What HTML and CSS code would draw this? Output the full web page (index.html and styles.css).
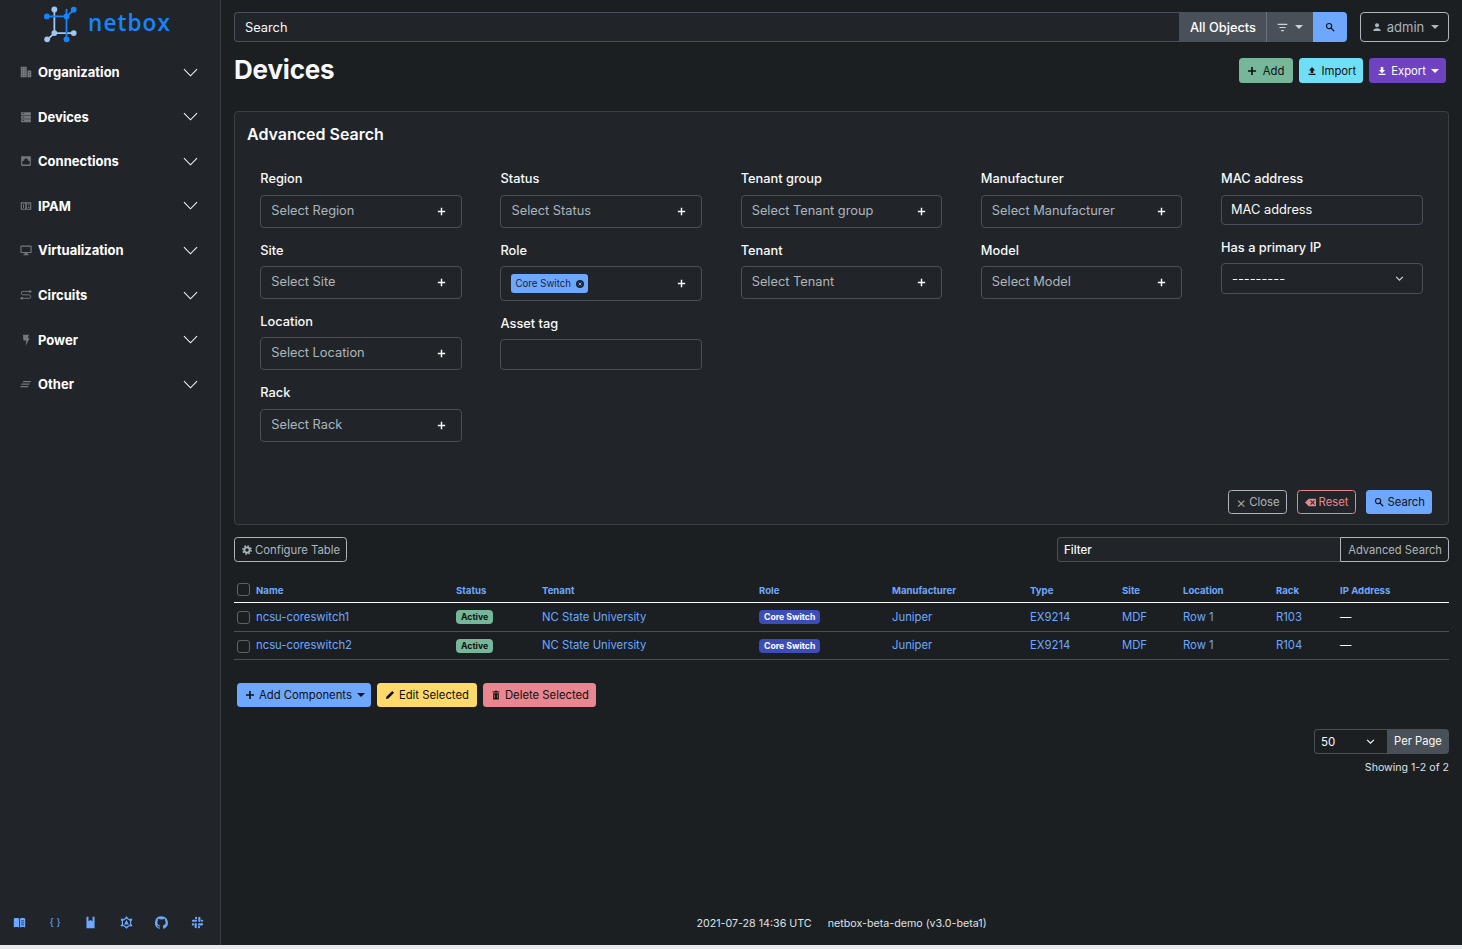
FILE: index.html
```html
<!DOCTYPE html>
<html lang="en">
<head>
<meta charset="utf-8">
<title>Devices - NetBox</title>
<link rel="stylesheet" href="styles.css">
</head>
<body>
<svg class="defs" width="0" height="0" aria-hidden="true">
  <symbol id="i-search" viewBox="0 0 16 16"><circle cx="6.500" cy="6.500" r="4.200" fill="none" stroke="currentColor" stroke-width="1.800"/><path d="M9.800 9.800 14 14" stroke="currentColor" stroke-width="2" stroke-linecap="round"/></symbol>
  <symbol id="i-plus" viewBox="0 0 16 16"><path d="M8 1.500v13M1.500 8h13" stroke="currentColor" stroke-width="2.600"/></symbol>
  <symbol id="i-chev" viewBox="0 0 16 16"><path d="M1 4.500 8 11.500 15 4.500" fill="none" stroke="currentColor" stroke-width="1.100"/></symbol>
  <symbol id="i-chev2" viewBox="0 0 16 16"><path d="M2 5 8 11 14 5" fill="none" stroke="currentColor" stroke-width="2"/></symbol>
  <symbol id="i-up" viewBox="0 0 16 16"><path d="M8 1.500 3 7h3v4h4V7h3zM2.500 12.300h11V14.500h-11z" fill="currentColor"/></symbol>
  <symbol id="i-down" viewBox="0 0 16 16"><path d="M6 1.500h4v5h3L8 11.500 3 6.500h3zM2.500 12.300h11V14.500h-11z" fill="currentColor"/></symbol>
</svg>
<div class="app">
  <aside class="sidebar">
    <div class="brand">
      <svg class="logo-mark" viewBox="0 0 40 40" aria-hidden="true">
        <g stroke-width="2" fill="none" stroke-linecap="round">
          <path stroke="#9cc8f3" d="M11.500 3v26.500M11.500 29.500H33M11.500 29.500 3.500 37"/>
          <path stroke="#1685fc" d="M2.500 11H25M25 3.500 25 37M25 11 33 4"/>
        </g>
        <g fill="#9cc8f3"><circle cx="11.500" cy="3.200" r="3.200"/><circle cx="11.500" cy="29.500" r="3.200"/><circle cx="33" cy="29.500" r="3.200"/><circle cx="3.500" cy="36.500" r="3.200"/></g>
        <g fill="#1685fc"><circle cx="3.200" cy="11" r="3.200"/><circle cx="25" cy="11" r="3.200"/><circle cx="33" cy="3.500" r="3.200"/><circle cx="25" cy="36.500" r="3.200"/></g>
      </svg>
      <span class="brand-name">netbox</span>
    </div>
    <nav class="menu">
      <a class="menu-item"><svg class="menu-icon" viewBox="0 0 16 16"><path fill="currentColor" d="M1 1h8v14H1zM10 6h5v9h-5z"/><path fill="#212529" d="M3 3h1v1H3zM6 3h1v1H6zM3 6h1v1H3zM6 6h1v1H6zM3 9h1v1H3zM6 9h1v1H6zM3 12h1v1H3zM6 12h1v1H6zM12 8h1v1h-1zM12 11h1v1h-1z"/></svg><span>Organization</span><svg class="chev"><use href="#i-chev"/></svg></a>
      <a class="menu-item"><svg class="menu-icon" viewBox="0 0 16 16"><path fill="currentColor" d="M1.500 1.500h13v4h-13zM1.500 6.200h13v4h-13zM1.500 10.900h13V15h-13z"/><path fill="#212529" d="M3.500 3h2v1h-2zM3.500 7.700h2v1h-2zM3.500 12.400h2v1h-2z"/></svg><span>Devices</span><svg class="chev"><use href="#i-chev"/></svg></a>
      <a class="menu-item"><svg class="menu-icon" viewBox="0 0 16 16"><path fill="currentColor" fill-rule="evenodd" d="M2.500 1.500h11a1 1 0 0 1 1 1v11a1 1 0 0 1-1 1h-11a1 1 0 0 1-1-1v-11a1 1 0 0 1 1-1zM3 12.500h10V8h-2V6H9.500V4.500h-3V6H5v2H3z"/></svg><span>Connections</span><svg class="chev"><use href="#i-chev"/></svg></a>
      <a class="menu-item"><svg class="menu-icon" viewBox="0 0 16 16"><path fill="currentColor" fill-rule="evenodd" d="M1 3h14v10H1zM2.500 4.500v7h4.500v-7zM9 4.500v7h4.500v-7z"/><path fill="currentColor" d="M4 5.500h1.200v5H4zM10.500 5.500h2v1.500h-2zM10.500 9h2v1.500h-2z"/></svg><span>IPAM</span><svg class="chev"><use href="#i-chev"/></svg></a>
      <a class="menu-item"><svg class="menu-icon" viewBox="0 0 16 16"><path fill="currentColor" fill-rule="evenodd" d="M1.500 2h13a1 1 0 0 1 1 1v8a1 1 0 0 1-1 1h-13a1 1 0 0 1-1-1V3a1 1 0 0 1 1-1zM2 3.500v7h12v-7z"/><path fill="currentColor" d="M6 12h4v1.500h1.500V15h-7v-1.500H6z"/></svg><span>Virtualization</span><svg class="chev"><use href="#i-chev"/></svg></a>
      <a class="menu-item"><svg class="menu-icon" viewBox="0 0 16 16"><path fill="none" stroke="currentColor" stroke-width="1.300" d="M12.500 3.200H4a2.300 2.300 0 0 0 0 4.600h8a2.300 2.300 0 0 1 0 4.600H3.500"/><circle cx="13.500" cy="3.200" r="1.700" fill="currentColor"/><circle cx="2.500" cy="12.400" r="1.700" fill="currentColor"/></svg><span>Circuits</span><svg class="chev"><use href="#i-chev"/></svg></a>
      <a class="menu-item"><svg class="menu-icon" viewBox="0 0 16 16"><path fill="currentColor" d="M4 1h8L10.500 5.500H13L7.500 15.500l.8-7H4.500z"/></svg><span>Power</span><svg class="chev"><use href="#i-chev"/></svg></a>
      <a class="menu-item"><svg class="menu-icon" viewBox="0 0 16 16"><path fill="currentColor" d="M4.500 4H15l-1 1.600H3.500zM2.500 7.300h10.500l-1 1.600H1.500zM1 10.600h10.500l-1 1.600H0z"/></svg><span>Other</span><svg class="chev"><use href="#i-chev"/></svg></a>
    </nav>
    <div class="side-links">
      <svg class="side-icon" viewBox="0 0 16 16"><path fill="currentColor" d="M1 3c2-.8 4.500-.8 6.500 0v11c-2-.8-4.500-.8-6.500 0zM8.500 3c2-.8 4.500-.8 6.500 0v11c-2-.8-4.500-.8-6.500 0z"/><path fill="#212529" d="M10 5.500h3.500v1H10zM10 8h3.500v1H10zM10 10.500h3.500v1H10z"/></svg>
      <span class="side-braces">{ }</span>
      <svg class="side-icon" viewBox="0 0 16 16"><path fill="currentColor" d="M3 1h2.500v5.500L8 5l2.500 1.500V1H13v14H3z"/></svg>
      <svg class="side-icon" viewBox="0 0 16 16"><path fill="none" stroke="currentColor" stroke-width="1.500" d="M8 2.500 13 5.500v5.500l-5 3-5-3V5.500z"/><path fill="currentColor" d="M8 0l1.700 2.500H6.300zM8 16l-1.700-2.500h3.400zM5 10.500 8 5l3 5.500z"/><circle cx="2.500" cy="4.500" r="1.500" fill="currentColor"/><circle cx="13.500" cy="4.500" r="1.500" fill="currentColor"/><circle cx="2.500" cy="11.500" r="1.500" fill="currentColor"/><circle cx="13.500" cy="11.500" r="1.500" fill="currentColor"/></svg>
      <svg class="side-icon" viewBox="0 0 16 16"><path fill="currentColor" d="M8 .2a8 8 0 0 0-2.500 15.600c.4.100.5-.2.500-.4v-1.400c-2.200.5-2.700-1-2.700-1-.4-.9-.9-1.200-.9-1.200-.7-.5.100-.5.100-.5.800.1 1.200.8 1.200.8.700 1.200 1.900.9 2.300.7.100-.5.300-.9.500-1.100-1.800-.2-3.600-.9-3.600-4 0-.9.300-1.600.8-2.100-.1-.2-.4-1 .1-2.100 0 0 .7-.2 2.200.8a7.600 7.600 0 0 1 4 0c1.500-1 2.200-.8 2.200-.8.400 1.100.2 1.900.1 2.100.5.600.8 1.300.8 2.100 0 3.100-1.900 3.700-3.700 3.900.3.300.6.800.6 1.500v2.200c0 .2.100.5.600.4A8 8 0 0 0 8 .2z"/></svg>
      <svg class="side-icon" viewBox="0 0 16 16"><g fill="currentColor"><rect x="1" y="4.500" width="6.500" height="2.600" rx="1.300"/><rect x="5" y="1" width="2.600" height="3" rx="1.200"/><rect x="9" y="1" width="2.600" height="6.500" rx="1.300"/><rect x="12" y="4.500" width="3" height="2.600" rx="1.200"/><rect x="8.500" y="9" width="6.500" height="2.600" rx="1.300"/><rect x="8.500" y="12" width="2.600" height="3" rx="1.200"/><rect x="4.500" y="8.500" width="2.600" height="6.500" rx="1.300"/><rect x="1" y="9" width="3" height="2.600" rx="1.200"/></g></svg>
    </div>
  </aside>
  <main class="main">
    <header class="topbar">
      <div class="search-group">
        <div class="search-input">Search</div>
        <div class="search-objects">All Objects</div>
        <div class="search-filter"><svg class="i-filter" viewBox="0 0 16 16"><path d="M1 3.500h14M3.500 8h9M6 12.500h4" stroke="currentColor" stroke-width="1.600"/></svg><i class="caret"></i></div>
        <div class="search-go"><svg class="ico10"><use href="#i-search"/></svg></div>
      </div>
      <div class="user-btn"><svg class="i-user" viewBox="0 0 16 16"><circle cx="8" cy="5" r="3.200" fill="currentColor"/><path d="M2 14.500c0-3 2.500-4.500 6-4.500s6 1.500 6 4.500z" fill="currentColor"/></svg><span>admin</span><i class="caret"></i></div>
    </header>
    <section class="title-row">
      <h1 class="page-title">Devices</h1>
      <div class="actions">
        <a class="btn btn-green"><svg class="ico10"><use href="#i-plus"/></svg><span class="gap5">Add</span></a>
        <a class="btn btn-cyan"><svg class="ico10"><use href="#i-up"/></svg>Import</a>
        <a class="btn btn-purple"><svg class="ico10"><use href="#i-down"/></svg>Export<i class="caret"></i></a>
      </div>
    </section>
    <section class="card">
      <h2 class="card-title">Advanced Search</h2>
      <div class="filter-grid">
        <div class="filter-col">
          <div class="field"><label>Region</label><div class="select">Select Region<svg class="plus"><use href="#i-plus"/></svg></div></div>
          <div class="field"><label>Site</label><div class="select">Select Site<svg class="plus"><use href="#i-plus"/></svg></div></div>
          <div class="field"><label>Location</label><div class="select">Select Location<svg class="plus"><use href="#i-plus"/></svg></div></div>
          <div class="field"><label>Rack</label><div class="select">Select Rack<svg class="plus"><use href="#i-plus"/></svg></div></div>
        </div>
        <div class="filter-col">
          <div class="field"><label>Status</label><div class="select">Select Status<svg class="plus"><use href="#i-plus"/></svg></div></div>
          <div class="field"><label>Role</label><div class="select select-tag"><span class="tag">Core Switch<svg class="tag-x" viewBox="0 0 16 16"><circle cx="8" cy="8" r="8" fill="currentColor"/><path d="M5 5l6 6M11 5l-6 6" stroke="#6ea8fe" stroke-width="2"/></svg></span><svg class="plus"><use href="#i-plus"/></svg></div></div>
          <div class="field field-asset"><label>Asset tag</label><div class="input-empty"></div></div>
        </div>
        <div class="filter-col">
          <div class="field"><label>Tenant group</label><div class="select">Select Tenant group<svg class="plus"><use href="#i-plus"/></svg></div></div>
          <div class="field"><label>Tenant</label><div class="select">Select Tenant<svg class="plus"><use href="#i-plus"/></svg></div></div>
        </div>
        <div class="filter-col">
          <div class="field"><label>Manufacturer</label><div class="select">Select Manufacturer<svg class="plus"><use href="#i-plus"/></svg></div></div>
          <div class="field"><label>Model</label><div class="select">Select Model<svg class="plus"><use href="#i-plus"/></svg></div></div>
        </div>
        <div class="filter-col">
          <div class="field"><label>MAC address</label><div class="input-mac">MAC address</div></div>
          <div class="field field-ip"><label>Has a primary IP</label><div class="select-ip">---------<svg class="chev-small"><use href="#i-chev2"/></svg></div></div>
        </div>
      </div>
      <div class="card-actions">
        <a class="btn btn-outline"><span class="x">×</span>Close</a>
        <a class="btn btn-outline-red"><svg class="ico11" viewBox="0 0 16 16"><path fill="currentColor" fill-rule="evenodd" d="M5.500 2.500H16v11H5.500L0 8zM7.500 5.500 10 8l-2.500 2.500 1 1L11 9l2.500 2.500 1-1L12 8l2.500-2.500-1-1L11 7 8.500 4.500z"/></svg>Reset</a>
        <a class="btn btn-blue"><svg class="ico10"><use href="#i-search"/></svg>Search</a>
      </div>
    </section>
    <section class="table-tools">
      <a class="btn btn-outline btn-config"><svg class="ico10" viewBox="0 0 16 16"><circle cx="8" cy="8" r="4.300" fill="none" stroke="currentColor" stroke-width="3"/><circle cx="8" cy="8" r="6.600" fill="none" stroke="currentColor" stroke-width="2.400" stroke-dasharray="2.590 2.590"/></svg>Configure Table</a>
      <div class="filter-group"><div class="filter-input">Filter</div><div class="filter-adv">Advanced Search</div></div>
    </section>
    <table class="devices">
      <thead>
        <tr><th class="c-check"><i class="check"></i></th><th class="c-name">Name</th><th class="c-status">Status</th><th class="c-tenant">Tenant</th><th class="c-role">Role</th><th class="c-man">Manufacturer</th><th class="c-type">Type</th><th class="c-site">Site</th><th class="c-loc">Location</th><th class="c-rack">Rack</th><th>IP Address</th></tr>
      </thead>
      <tbody>
        <tr><td><i class="check"></i></td><td><a>ncsu-coreswitch1</a></td><td><span class="badge badge-green">Active</span></td><td><a>NC State University</a></td><td><span class="badge badge-indigo">Core Switch</span></td><td><a>Juniper</a></td><td><a>EX9214</a></td><td><a>MDF</a></td><td><a>Row 1</a></td><td><a>R103</a></td><td>—</td></tr>
        <tr><td><i class="check"></i></td><td><a>ncsu-coreswitch2</a></td><td><span class="badge badge-green">Active</span></td><td><a>NC State University</a></td><td><span class="badge badge-indigo">Core Switch</span></td><td><a>Juniper</a></td><td><a>EX9214</a></td><td><a>MDF</a></td><td><a>Row 1</a></td><td><a>R104</a></td><td>—</td></tr>
      </tbody>
    </table>
    <section class="bulk">
      <a class="btn btn-blue"><svg class="ico10"><use href="#i-plus"/></svg>Add Components<i class="caret"></i></a>
      <a class="btn btn-yellow"><svg class="ico10" viewBox="0 0 16 16"><path fill="currentColor" d="M11.500 1.500 14.500 4.500 5.500 13.500 1.500 14.500 2.500 10.500z"/></svg>Edit Selected</a>
      <a class="btn btn-red"><svg class="ico10" viewBox="0 0 16 16"><path fill="currentColor" fill-rule="evenodd" d="M6 1h4v1.500h3.500V4h-11V2.500H6zM3.500 5h9v10h-9zM5.500 7v6h1V7zM9.500 7v6h1V7z"/></svg>Delete Selected</a>
    </section>
    <section class="pager">
      <div class="per-page"><div class="per-select">50<svg class="chev-small light"><use href="#i-chev2"/></svg></div><div class="per-label">Per Page</div></div>
      <div class="showing">Showing 1-2 of 2</div>
    </section>
    <footer class="footer"><span>2021-07-28 14:36 UTC</span><span>netbox-beta-demo (v3.0-beta1)</span></footer>
  </main>
</div>
<div class="window-edge"></div>
</body>
</html>
```
FILE: styles.css
```css
* { box-sizing: border-box; }
html, body { margin: 0; height: 100%; }
body { background: #1b1f22; color: #f8f9fa; font-family: Inter, "Liberation Sans", sans-serif; font-size: 13px; overflow: hidden; }
.defs { position: absolute; }
a { text-decoration: none; color: inherit; }
.app { display: flex; height: 945px; }
.sidebar { width: 221px; flex: none; background: #212529; border-right: 1px solid #3a3f44; display: flex; flex-direction: column; }
.brand { height: 50px; display: flex; align-items: flex-start; padding: 6px 0 0 44px; gap: 8px; }
.logo-mark { width: 36px; height: 37px; }
.brand-name { color: #1685fc; font-size: 22.500px; font-weight: 600; letter-spacing: 1.100px; line-height: 33px; font-family: "Open Sans", sans-serif; }
.menu { display: flex; flex-direction: column; }
.menu-item { height: 44.550px; display: flex; align-items: center; padding: 0 22.500px 0 20px; font-weight: 700; font-size: 13px; color: #fff; }
.menu-item span { flex: 1; margin-left: 6px; }
.menu-icon { width: 12px; height: 12px; color: #73787d; }
.chev { width: 15px; height: 15px; color: #f8f9fa; }
.side-links { margin-top: auto; height: 30px; display: flex; align-items: flex-start; justify-content: space-between; padding: 0 16px 0 13px; color: #6ea8fe; }
.side-icon { width: 13px; height: 13px; margin-top: 1px; }
.side-braces { width: 13px; text-align: center; white-space: nowrap; font-size: 10px; line-height: 14px; }
.main { flex: 1; padding: 12px 13px 0; display: flex; flex-direction: column; min-width: 0; }
.topbar { display: flex; gap: 13px; height: 30px; flex: none; }
.search-group { flex: 1; display: flex; height: 30px; }
.search-input { flex: 1; background: #212529; border: 1px solid #495057; border-right: 0; border-radius: 4px 0 0 4px; padding: 0 10px; line-height: 29px; font-size: 12.800px; color: #f8f9fa; }
.search-objects { width: 87px; background: #495057; font-size: 12.800px; font-weight: 500; line-height: 31px; padding-left: 1px; text-align: center; color: #fff; }
.search-filter { width: 47px; background: #495057; border-left: 1px solid #6c757d; display: flex; align-items: center; justify-content: center; gap: 7px; color: #d0d3d6; }
.i-filter { width: 11px; height: 11px; }
.search-go { width: 34px; background: #6ea8fe; color: #111; border-radius: 0 4px 4px 0; display: flex; align-items: center; justify-content: center; }
.ico10 { width: 10px; height: 10px; flex: none; }
.ico11 { width: 11px; height: 11px; flex: none; }
.caret { display: inline-block; width: 0; height: 0; border: 4px solid transparent; border-top-color: currentColor; border-bottom: 0; margin-left: 7px; }
.search-filter .caret { margin-left: 0; }
.user-btn { width: 89px; border: 1px solid #adb5bd; border-radius: 4px; padding-left: 2px; display: flex; align-items: center; justify-content: center; color: #adb5bd; font-size: 13px; }
.i-user { width: 10px; height: 10px; margin-right: 5px; }
.title-row { display: flex; align-items: flex-start; justify-content: space-between; flex: none; height: 69px; }
.page-title { margin: 11px 0 0; font-size: 26px; line-height: 34px; font-weight: 700; letter-spacing: -.2px; color: #f8f9fa; }
.actions { display: flex; gap: 6px; margin: 16px 3px 0 0; }
.actions .btn { height: 25px; }
.btn { display: inline-flex; align-items: center; height: 24px; padding: 0 7px 0 8px; border-radius: 3.500px; font-size: 11.300px; gap: 4px; white-space: nowrap; }
.btn .caret { margin-left: 1px; }
.btn-green { background: #75b798; color: #111; padding-right: 9px; }
.gap5 { margin-left: 2px; }
.btn-cyan { background: #6edff6; color: #111; }
.btn-purple { background: #6f42c1; color: #fff; }
.btn-blue { background: #6ea8fe; color: #111; }
.btn-yellow { background: #ffda6a; color: #111; padding-right: 8px; }
.btn-red { background: #ea868f; color: #111; }
.btn-outline { border: 1px solid #adb5bd; color: #adb5bd; padding: 0 6px 0 7px; }
.btn-outline-red { border: 1px solid #ea868f; color: #ea868f; padding: 0 6px 0 7px; gap: 3px; }
.btn-config { gap: 3px; height: 25px; }
.card { flex: none; height: 414px; background: #212529; border: 1px solid #3a3f44; border-radius: 4px; padding: 11px 12px 0; display: flex; flex-direction: column; }
.card-title { margin: 0; font-size: 16px; line-height: 22px; font-weight: 600; color: #f8f9fa; }
.filter-grid { display: grid; grid-template-columns: repeat(5, 201.600px); column-gap: 38.600px; padding: 24.300px 0 0 13.300px; flex: 1; }
.filter-col { display: flex; flex-direction: column; }
.field { height: 71.300px; }
.field label { display: block; font-size: 12.800px; line-height: 19px; margin-bottom: 6.500px; font-weight: 500; color: #f8f9fa; }
.select { height: 33px; border: 1px solid #495057; border-radius: 4px; background: #212529; display: flex; align-items: center; justify-content: space-between; padding: 0 15px 2px 10px; font-size: 12.800px; color: #adb5bd; }
.plus { width: 9px; height: 9px; margin-top: 2px; color: #f8f9fa; flex: none; }
.select-tag { height: 35px; padding-bottom: 0; }
.select-tag .plus { margin-top: 0; }
.tag { background: #6ea8fe; color: #1b2530; border-radius: 3px; height: 19px; display: inline-flex; align-items: center; padding: 0 4px; font-size: 9.700px; gap: 5px; }
.tag-x { width: 8px; height: 8px; }
.field .field-asset-label { margin: 0; }
.field-asset label { margin: 2px 0 6px; }
.input-empty { height: 31px; border: 1px solid #495057; border-radius: 4px; }
.input-mac { height: 30px; border: 1px solid #495057; border-radius: 4px; padding: 0 9px; line-height: 28px; font-size: 12.800px; color: #f8f9fa; }
.field-ip label { margin: -1px 0 6px; }
.field-ip { height: auto; margin-top: -2px; }
.select-ip { height: 31px; border: 1px solid #495057; border-radius: 4px; display: flex; align-items: center; justify-content: space-between; padding: 0 18px 0 10px; font-size: 12.800px; color: #f8f9fa; }
.chev-small { width: 9px; height: 9px; color: #ced4da; }
.chev-small.light { color: #f8f9fa; }
.card-actions { display: flex; justify-content: flex-end; gap: 10px; padding: 0 4px 10px 0; }
.x { font-size: 15px; line-height: 1; font-weight: 300; width: 8px; margin-right: 1px; text-align: center; color: #adb5bd; }
.table-tools { display: flex; justify-content: space-between; flex: none; margin-top: 12px; height: 25px; }
.filter-group { display: flex; width: 392px; }
.filter-input { flex: 1; background: #212529; border: 1px solid #495057; border-right: 0; border-radius: 4px 0 0 4px; padding: 0 6px; line-height: 24px; font-size: 11.500px; font-weight: 500; }
.filter-adv { border: 1px solid #adb5bd; border-radius: 0 4px 4px 0; padding: 0 6px 0 7px; line-height: 24px; font-size: 11.200px; color: #adb5bd; }
.devices { width: 100%; border-collapse: collapse; table-layout: fixed; margin-top: 15px; flex: none; }
.devices th { height: 25px; padding: 3px 0 0; font-size: 9.600px; font-weight: 700; color: #6ea8fe; text-align: left; border-bottom: 1px solid #f8f9fa; }
.devices td { height: 28px; padding: 0; font-size: 11.300px; color: #f8f9fa; border-bottom: 1px solid #495057; }
.devices tbody tr:first-child td { height: 29px; }
.devices a { color: #6ea8fe; }
.check { display: block; width: 13px; height: 13px; margin-left: 3px; border: 1px solid #5c636a; border-radius: 3px; }
td .check { margin-top: 2px; }
th .check { margin-top: -3px; }
.c-check { width: 22px; }
.c-name { width: 200px; }
.c-status { width: 86px; }
.c-tenant { width: 217px; }
.c-role { width: 133px; }
.c-man { width: 138px; }
.c-type { width: 92px; }
.c-site { width: 61px; }
.c-loc { width: 93px; }
.c-rack { width: 64px; }
.badge { display: inline-block; font-size: 8.700px; font-weight: 700; line-height: 14px; height: 14px; padding: 0 5px; border-radius: 4px; }
.badge-green { background: #75b798; color: #111; }
.badge-indigo { background: #3d4db8; color: #fff; }
.bulk { display: flex; gap: 6px; flex: none; margin: 23px 0 0 3px; }
.bulk .btn-blue { padding-right: 6px; }
.pager { flex: none; margin-top: 22.500px; display: flex; flex-direction: column; align-items: flex-end; }
.per-page { display: flex; height: 25px; }
.per-select { width: 73px; border: 1px solid #495057; border-right: 0; border-radius: 4px 0 0 4px; background: #1b1f22; display: flex; align-items: center; justify-content: space-between; padding: 0 12px 0 6px; font-size: 11.500px; }
.per-label { width: 62px; background: #495057; border-radius: 0 4px 4px 0; line-height: 25px; text-align: center; font-size: 11.200px; color: #f8f9fa; }
.showing { margin-top: 5.500px; font-size: 10.600px; line-height: 15px; color: #dee2e6; }
.footer { margin-top: auto; height: 30px; display: flex; justify-content: center; gap: 16px; font-size: 10.700px; padding-top: 2px; color: #dee2e6; }
.window-edge { height: 4px; background: #e9e9e9; }
```
